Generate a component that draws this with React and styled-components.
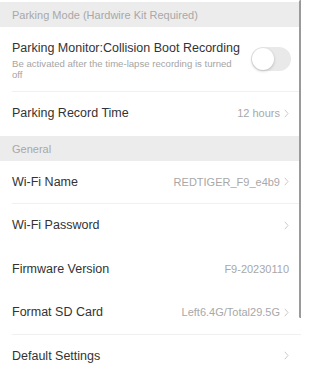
import React from "react";
import styled, { createGlobalStyle } from "styled-components";

const GlobalStyle = createGlobalStyle`
  html, body {
    margin: 0;
    padding: 0;
    background: #fff;
  }
  body {
    font-family: "Liberation Sans", Arial, sans-serif;
    -webkit-font-smoothing: antialiased;
  }
`;

const Page = styled.div`
  position: relative;
  width: 301px;
  height: 370px;
  overflow: hidden;
  padding-top: 2px;
  box-sizing: border-box;
`;

const Scrollbar = styled.div`
  position: absolute;
  top: 0;
  left: 299px;
  width: 3px;
  height: 318px;
  border-radius: 2px;
  background: #9a9a9a;
`;

const SectionHeader = styled.div`
  height: 25px;
  background: #ececec;
  display: flex;
  align-items: center;
  padding-left: 12px;
  padding-top: 1px;
  box-sizing: border-box;
  font-size: 11px;
  color: #a8a8a8;
`;

const Row = styled.div`
  height: ${({ tall }) => (tall ? "65px" : "43.5px")};
  margin-left: 12px;
  padding-right: 12px;
  display: flex;
  align-items: center;
  justify-content: space-between;
  border-bottom: 1px solid ${({ divider }) => (divider ? "#f0f0f0" : "transparent")};
  box-sizing: border-box;
`;

const TextBlock = styled.div`
  display: flex;
  flex-direction: column;
  width: 232px;
  padding-top: 2px;
`;

const Title = styled.div`
  font-size: 12.5px;
  color: #333;
  white-space: nowrap;
`;

const Subtitle = styled.div`
  font-size: 9.6px;
  line-height: 11px;
  color: #a5a5a5;
  margin-top: 3px;
`;

const Value = styled.div`
  display: flex;
  align-items: center;
  gap: 4px;
  font-size: 11px;
  color: #a8a8a8;
`;

const Chevron = () => (
  <svg width="5" height="9" viewBox="0 0 5 9">
    <path d="M0.8 0.8 L4 4.5 L0.8 8.2" fill="none" stroke="#c4c4c4" strokeWidth="0.9" />
  </svg>
);

const Track = styled.div`
  width: 40px;
  height: 24px;
  border-radius: 12px;
  background: #e9e9e9;
  position: relative;
  flex-shrink: 0;
  margin-right: -2px;
`;

const Knob = styled.div`
  position: absolute;
  top: 1px;
  left: 1px;
  width: 22px;
  height: 22px;
  border-radius: 50%;
  background: #fff;
  box-shadow: 0 1px 3px rgba(0, 0, 0, 0.22);
`;

const Toggle = () => (
  <Track>
    <Knob />
  </Track>
);

const items = [
  { title: "Wi-Fi Name", value: "REDTIGER_F9_e4b9", chevron: true, divider: true },
  { title: "Wi-Fi Password", value: "", chevron: true },
  { title: "Firmware Version", value: "F9-20230110", chevron: false },
  { title: "Format SD Card", value: "Left6.4G/Total29.5G", chevron: true, divider: true },
  { title: "Default Settings", value: "", chevron: true },
];

export default function App() {
  return (
    <>
      <GlobalStyle />
      <Page>
        <SectionHeader>Parking Mode (Hardwire Kit Required)</SectionHeader>
        <Row tall divider>
          <TextBlock>
            <Title>Parking Monitor:Collision Boot Recording</Title>
            <Subtitle>Be activated after the time-lapse recording is turned off</Subtitle>
          </TextBlock>
          <Toggle />
        </Row>
        <Row>
          <Title>Parking Record Time</Title>
          <Value>
            12 hours
            <Chevron />
          </Value>
        </Row>
        <SectionHeader>General</SectionHeader>
        {items.map((it) => (
          <Row key={it.title} divider={it.divider}>
            <Title>{it.title}</Title>
            <Value>
              {it.value}
              {it.chevron && <Chevron />}
            </Value>
          </Row>
        ))}
        <Scrollbar />
      </Page>
    </>
  );
}
